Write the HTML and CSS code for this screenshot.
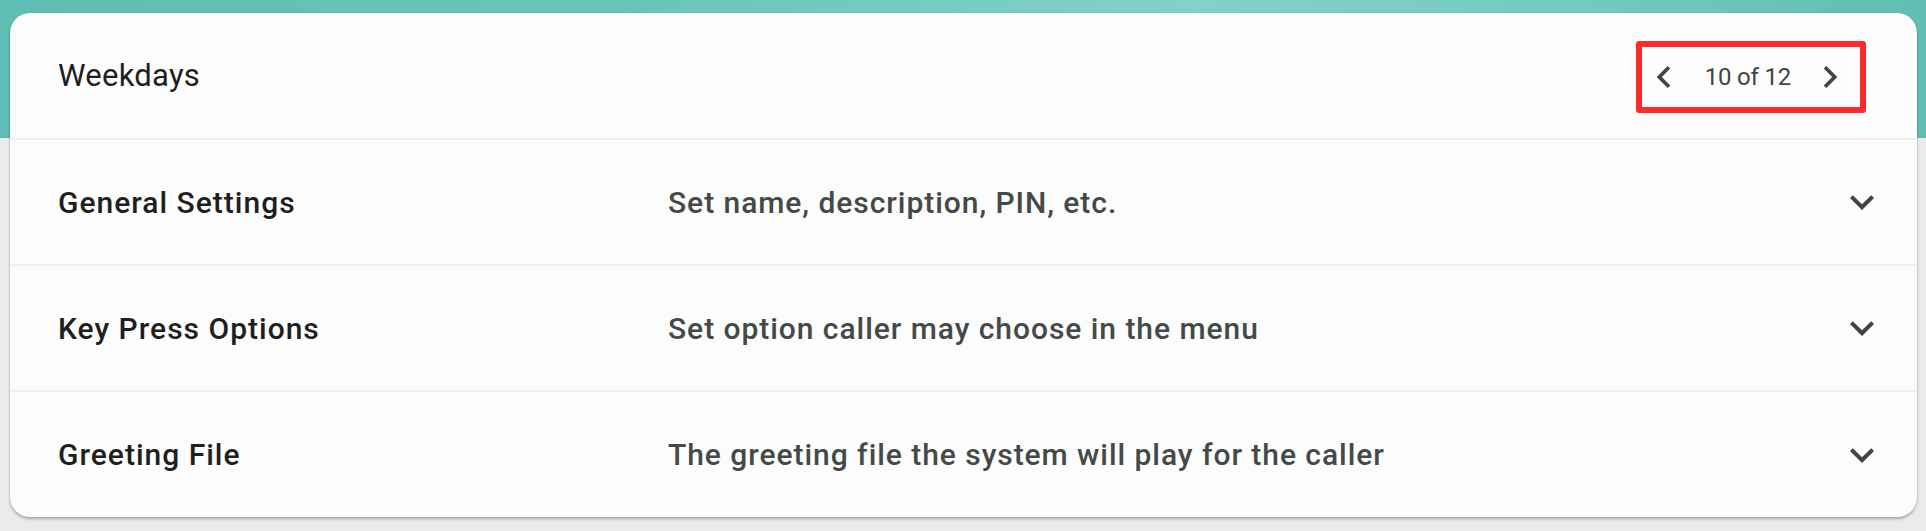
FILE: index.html
```html
<!DOCTYPE html>
<html>
<head>
<meta charset="utf-8">
<link rel="stylesheet" href="styles.css">
</head>
<body>
<div class="page">
  <div class="band"></div>
  <div class="card">
    <div class="header">
      <div class="header-title">Weekdays</div>
      <div class="pager">
        <svg class="pager-icon" viewBox="0 0 24 24"><path d="M15.41 7.41L14 6l-6 6 6 6 1.41-1.41L10.83 12z"/></svg>
        <span class="pager-text">10 of 12</span>
        <svg class="pager-icon" viewBox="0 0 24 24"><path d="M10 6L8.59 7.41 13.17 12l-4.58 4.59L10 18l6-6z"/></svg>
      </div>
    </div>
    <div class="row">
      <div class="row-label">General Settings</div>
      <div class="row-desc">Set name, description, PIN, etc.</div>
      <svg class="row-icon" viewBox="0 0 24 24"><path d="M16.59 8.59L12 13.17 7.41 8.59 6 10l6 6 6-6z"/></svg>
    </div>
    <div class="row">
      <div class="row-label">Key Press Options</div>
      <div class="row-desc">Set option caller may choose in the menu</div>
      <svg class="row-icon" viewBox="0 0 24 24"><path d="M16.59 8.59L12 13.17 7.41 8.59 6 10l6 6 6-6z"/></svg>
    </div>
    <div class="row">
      <div class="row-label">Greeting File</div>
      <div class="row-desc">The greeting file the system will play for the caller</div>
      <svg class="row-icon" viewBox="0 0 24 24"><path d="M16.59 8.59L12 13.17 7.41 8.59 6 10l6 6 6-6z"/></svg>
    </div>
  </div>
</div>
</body>
</html>
```
FILE: styles.css
```css
html, body {
  margin: 0;
  padding: 0;
}
body {
  background: #ebebeb;
  font-family: Roboto, "Liberation Sans", sans-serif;
}
.page {
  position: relative;
  width: 1926px;
  height: 531px;
  overflow: hidden;
}
.band {
  position: absolute;
  left: 0;
  top: 0;
  width: 100%;
  height: 138px;
  background: linear-gradient(90deg, #60bdb3 0%, #6cc5bb 35%, #82d1ca 62%, #76cac2 80%, #62bdb3 100%);
}
.card {
  position: relative;
  margin: 13px 9px 0 10px;
  background: #fbfcfb;
  border-radius: 20px;
  box-shadow: 0 2px 3px rgba(0, 0, 0, 0.28), 0 0 2px rgba(0, 0, 0, 0.08);
  display: flex;
  flex-direction: column;
  overflow: hidden;
}
.header {
  height: 125px;
  display: flex;
  align-items: center;
  justify-content: space-between;
  padding: 0 51px 0 48px;
}
.header-title {
  font-size: 31px;
  letter-spacing: 0.25px;
  color: #1f1f1f;
  font-weight: 400;
}
.pager {
  display: flex;
  align-items: center;
  border: 6px solid #ff2b2b;
  border-radius: 3px;
  height: 60px;
  padding: 0 8px 0 0;
  margin-top: 3px;
  color: #3f4644;
}
.pager-icon {
  width: 44px;
  height: 44px;
  fill: #3f4644;
}
.pager-text {
  font-size: 24px;
  letter-spacing: -0.2px;
  margin: 0 17px 0 19px;
}
.row {
  height: 126px;
  display: flex;
  align-items: center;
  padding: 0 31px 0 48px;
  border-top: 2px solid #efefef;
  box-sizing: border-box;
}
.row:last-child {
  height: 127px;
}
.row-label {
  width: 610px;
  flex: none;
  font-size: 30px;
  letter-spacing: 1px;
  font-weight: 500;
  color: #1f1f1f;
}
.row-desc {
  flex: 1;
  font-size: 30px;
  letter-spacing: 0.95px;
  font-weight: 500;
  color: #434a48;
}
.row-icon {
  width: 48px;
  height: 48px;
  fill: #3f4644;
}
```
